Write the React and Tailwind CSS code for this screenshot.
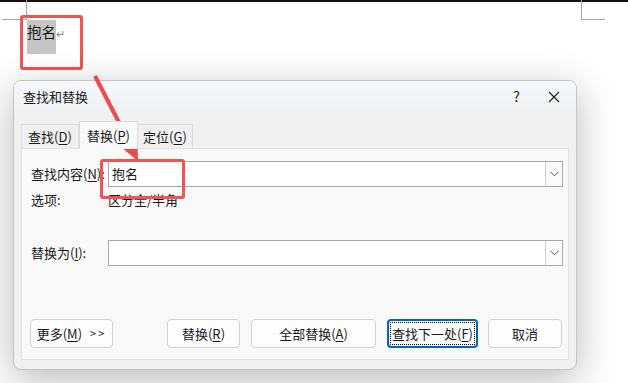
import React from "react";

const font = {
  fontFamily: '"Noto Sans CJK SC", "Noto Sans", "Liberation Sans", sans-serif',
};

const U = ({ children }) => <span className="underline underline-offset-2">{children}</span>;

const Combo = ({ value }) => (
  <div className="flex-1 h-full flex items-stretch bg-white border border-[#a9a9a9]">
    <div className="flex-1 flex items-center pl-[3px] text-[13px] text-[#1a1a1a]">{value}</div>
    <div className="w-[17px] border-l border-[#cfcfcf] flex items-center justify-center bg-[#fbfbfb]">
      <svg width="9" height="6" viewBox="0 0 9 6">
        <path d="M0.5 0.8 L4.5 4.8 L8.5 0.8" fill="none" stroke="#555" strokeWidth="1" />
      </svg>
    </div>
  </div>
);

const Btn = ({ w, children, focus }) => (
  <button
    className={`h-full rounded-[4px] text-[13px] text-[#1a1a1a] flex items-center justify-center ${
      focus ? "border-2 border-[#0067c0] bg-[#fdfdfd] p-[1px]" : "border border-[#d2d2d2] bg-[#fdfdfd]"
    } ${w}`}
  >
    {focus ? (
      <span className="w-full h-full border border-dotted border-black flex items-center justify-center">
        {children}
      </span>
    ) : (
      children
    )}
  </button>
);

export default function App() {
  return (
    <div className="relative w-[628px] h-[383px] bg-white overflow-hidden" style={font}>
      {/* document */}
      <div className="h-[2px] bg-[#111]" />
      <div className="absolute left-[26px] top-0 w-px h-[19px] bg-[#a8a8a8]" />
      <div className="absolute left-[2px] top-[19px] w-[25px] h-px bg-[#a8a8a8]" />
      <div className="absolute left-[581px] top-0 w-px h-[19px] bg-[#a8a8a8]" />
      <div className="absolute left-[581px] top-[19px] w-[24px] h-px bg-[#a8a8a8]" />
      <div className="absolute left-[27px] top-[20px] flex items-start">
        <span className="bg-[#c6c6c6] h-[34px] text-[14.5px] leading-[24px] text-[#1a1a1a]">抱名</span>
        <span className="text-[11px] leading-[24px] text-[#8a8a8a] mt-[1px]">↵</span>
      </div>
      <div className="absolute left-[20px] top-[15px] w-[63px] h-[55px] border-[3px] border-[#f15454] rounded-[3px]" />

      {/* dialog */}
      <div className="absolute left-[13px] top-[80px] w-[564px] h-[290px] rounded-[8px] border border-[#c4c4c4] bg-[#f0f0f0] shadow-[0_10px_40px_rgba(0,0,0,0.28)] flex flex-col overflow-hidden">
        <div className="h-[31px] flex items-center bg-gradient-to-b from-[#f6f8fb] to-[#f0f1f3] text-[13px] text-[#1a1a1a]">
          <span className="pl-[9px]">查找和替换</span>
          <span className="ml-auto mr-[28px] text-[14px]">?</span>
          <svg className="mr-[16px]" width="12" height="12" viewBox="0 0 12 12">
            <path d="M1 1 L11 11 M11 1 L1 11" stroke="#222" strokeWidth="1.2" />
          </svg>
        </div>

        <div className="flex items-end pl-[7px] mt-[9px] text-[13px] text-[#1a1a1a]">
          <div className="w-[58px] h-[24px] flex items-center justify-center border border-b-0 border-[#dcdcdc] bg-[#f0f0f0]">
            查找(<U>D</U>)
          </div>
          <div className="w-[59px] h-[28px] flex items-center justify-center border border-b-0 border-[#dcdcdc] bg-[#f9f9f9] relative z-10 -mb-px">
            替换(<U>P</U>)
          </div>
          <div className="w-[55px] h-[24px] flex items-center justify-center border border-b-0 border-l-0 border-[#dcdcdc] bg-[#f0f0f0]">
            定位(<U>G</U>)
          </div>
        </div>

        <div className="ml-[7px] w-[548px] h-[212px] bg-[#f9f9f9] border border-[#e2e2e2] flex flex-col text-[13px] text-[#1a1a1a]">
          <div className="mt-[12px] h-[26px] flex items-center pl-[9px] pr-[5px]">
            <span className="w-[77px]">查找内容(<U>N</U>):</span>
            <Combo value="抱名" />
          </div>
          <div className="mt-[3px] h-[20px] flex items-center pl-[9px]">
            <span className="w-[77px]">选项:</span>
            <span>区分全/半角</span>
          </div>
          <div className="mt-[30px] h-[26px] flex items-center pl-[9px] pr-[5px]">
            <span className="w-[77px]">替换为(<U>I</U>):</span>
            <Combo value="" />
          </div>
          <div className="mt-[53px] h-[29px] flex items-stretch pl-[8px]">
            <Btn w="w-[83px]">
              更多(<U>M</U>)<span className="ml-[8px] text-[11px] tracking-[2px]">&gt;&gt;</span>
            </Btn>
            <div className="w-[54px]" />
            <Btn w="w-[73px]">替换(<U>R</U>)</Btn>
            <div className="w-[11px]" />
            <Btn w="w-[125px]">全部替换(<U>A</U>)</Btn>
            <div className="w-[11px]" />
            <Btn w="w-[91px]" focus>
              查找下一处(<U>F</U>)
            </Btn>
            <div className="w-[10px]" />
            <Btn w="w-[74px]">取消</Btn>
          </div>
        </div>
      </div>

      {/* annotations */}
      <div className="absolute left-[100px] top-[159px] w-[85px] h-[40px] border-[3px] border-[#f15454] rounded-[3px]" />
      <svg className="absolute left-0 top-0" width="628" height="383" viewBox="0 0 628 383">
        <line x1="95" y1="76" x2="126" y2="136" stroke="#f04a4a" strokeWidth="4" />
        <polygon points="138,161 111,139 137,124" fill="#f04a4a" />
      </svg>
    </div>
  );
}
